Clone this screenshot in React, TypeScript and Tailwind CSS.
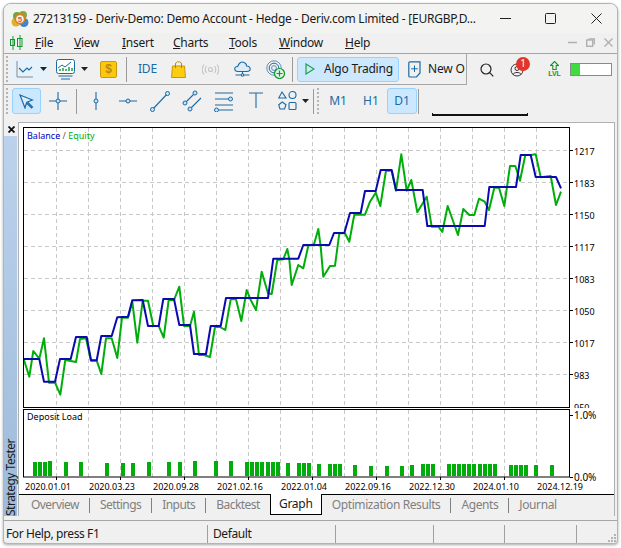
import React from "react";

const sans = "font-['Noto_Sans',sans-serif]";
const blue = "#1a6aa6";

const balance =
  "24,359 39.3,359 44,381.7 55,381.7 60,359 70.7,359 76,337 86.7,337 91,360.3 96.7,360.3 101.3,336 111.7,336 117.3,317.3 128,316.7 132.3,300.3 142.7,300 148,326 158.7,326 163.3,299 174,299 179.3,325 190,325 194,354 206,354 210.7,326 220.7,326 226,298 268,298 273.3,258.7 298.3,258.7 303.3,245 329.3,245 334,233 344.3,233 350,213 360.7,213 365,191 375.7,191 380.7,170 391.7,170 396,190 422.7,190 427.3,226 484.7,226 489.3,187 516,187 520.7,155 530.7,155 535.7,177 556,177 561,188.3";
const equity =
  "24,360 29.3,376.7 33.3,351 39.3,358.7 44,338.3 49,382.7 55,382.7 60.3,394.7 65.3,360 76,362 80,339 86,338.3 91,360.7 96.7,360.7 101.3,374 106,338.3 111.7,338.3 117.3,358 122,317.7 128,317.7 132.3,301.7 137.3,342.7 142.7,300.7 148,300.7 153.3,326 158.7,326 163.7,337.7 168.7,300 174,300 179.3,286.7 184,326 190,326 194,311.7 199,355 204,355 210,357 215,327 220,327 225.3,330 230.7,299.3 236,299.3 241.3,321 246.7,290 250.7,300 256,310 261.7,271.7 268,293.3 271.7,294 277.3,260 283.3,259.3 287.3,249 289.3,259.3 291.7,285 298.3,265 303.3,268.3 308.3,245.7 314,244.3 318.3,229 320.7,246.7 323.3,276.7 330,266 335,265.7 339.3,233.3 345,233.3 349.3,241.7 354.3,214.7 365,214.7 370,201.7 375.7,192.7 380.3,206 386,170.7 391.7,170.7 396,190.7 401.3,154.3 406.7,190.7 411.3,180 417.3,212.3 426.7,196.7 431.7,226.7 438.3,226.7 442.3,232 447.7,206 458,235 463.3,209 469.3,215 474.3,215 479,198.7 484.7,201.7 489,210 494.3,187.7 499,187.7 504.3,206 510,166 515.3,166 520,180.7 525.3,155 530.7,155 535.7,154.3 540.7,177.3 550.7,176 556,205 561,191.7";

const gridX = Array.from({ length: 16 }, (_, i) => 56.5 + 32 * i);
const gridY = [150.5, 182.5, 214.5, 246.5, 278.5, 310.5, 342.5, 374.5];
const yLabels = ["1217", "1183", "1150", "1117", "1083", "1050", "1017", "983", "950"];
const dates = ["2020.01.01", "2020.03.23", "2020.09.28", "2021.02.16", "2022.01.04", "2022.09.16", "2022.12.30", "2024.01.10", "2024.12.19"];

// x, top
const bars: [number, number][] = [
  [33, 462], [38, 462], [43, 462], [48, 461], [64, 462], [79, 462], [105, 463], [121, 463], [131, 463], [147, 462],
  [167, 462], [178, 462], [193, 461], [214, 461], [229, 461], [245, 462], [250, 462], [255, 462], [260, 462], [266, 462],
  [271, 462], [276, 462], [286, 463], [297, 463], [302, 463], [307, 463], [317, 464], [328, 464], [333, 464], [338, 464],
  [353, 465], [369, 466], [385, 466], [400, 466], [410, 465], [421, 464], [426, 464], [431, 464], [447, 464], [452, 464],
  [457, 464], [462, 464], [467, 464], [472, 464], [478, 464], [483, 464], [488, 464], [493, 464], [509, 465], [514, 465],
  [519, 465], [524, 465], [534, 465], [550, 465],
];

function Grip({ className }: { className?: string }) {
  return (
    <svg width="3" height="26" className={`shrink-0 ${className ?? ""}`}>
      {[1, 5, 9, 13, 17, 21, 25].map((y) => (
        <rect key={y} x="0" y={y - 1} width="2" height="2" fill="#b4b4b4" />
      ))}
    </svg>
  );
}

function Caret({ className }: { className?: string }) {
  return (
    <svg width="7" height="4" className={`shrink-0 ${className ?? ""}`}>
      <path d="M0 0H7L3.5 4Z" fill="#222" />
    </svg>
  );
}

function Sep({ className }: { className?: string }) {
  return <div className={`h-[25px] w-px shrink-0 bg-[#9a9a9a] ${className ?? ""}`} />;
}

function Logo() {
  return (
    <svg width="18" height="18" viewBox="0 0 18 18" className="shrink-0">
      <circle cx="5" cy="12" r="4.5" fill="#e3b02a" />
      <circle cx="13" cy="12.5" r="4.5" fill="#3f86c8" />
      <circle cx="6" cy="6" r="4" fill="#6fa83a" />
      <circle cx="12" cy="5" r="4" fill="#8aa63d" />
      <circle cx="9" cy="9" r="4.6" fill="#f4f4f4" stroke="#e07a1f" strokeWidth="1.6" />
      <text x="9" y="12" textAnchor="middle" fontSize="8" fontWeight="700" fill="#d9661a" fontFamily="Liberation Sans">5</text>
    </svg>
  );
}

function Candles() {
  return (
    <svg width="13" height="16" viewBox="0 0 13 16" stroke="#0c9a2c" fill="none" className="shrink-0">
      <path d="M3 1V15M10 0V15" />
      <rect x="0.5" y="4.5" width="4" height="6" />
      <rect x="7.5" y="3.5" width="4.5" height="8" />
    </svg>
  );
}

function Point({ cx, cy }: { cx: number; cy: number }) {
  return <circle cx={cx} cy={cy} r="2" fill="#cfe3f3" stroke={blue} strokeWidth="1" />;
}

function DrawIcon({ children }: { children: React.ReactNode }) {
  return (
    <svg width="20" height="22" viewBox="0 0 20 22" fill="none" stroke={blue} strokeWidth="1.1" className="shrink-0">
      {children}
    </svg>
  );
}

function Tab({ label, last, tight }: { label: string; last?: boolean; tight?: boolean }) {
  return (
    <div className="flex h-[20px] shrink-0 items-center">
      <span className={`px-[10px] text-[12px] text-[#808080] ${tight ? "tracking-[-0.55px]" : "tracking-[-0.4px]"}`}>{label}</span>
      {!last && <div className="h-[15px] w-px bg-[#808080]" />}
    </div>
  );
}

export default function App() {
  return (
    <div className={`h-[548px] w-[621px] overflow-hidden bg-white pb-[4px] pl-[3px] pr-[3px] pt-[3px] ${sans}`}>
      <div className="flex h-full flex-col overflow-hidden rounded-t-[8px] rounded-b-[4px] border border-[#b4b4b4] bg-[#f0f0f0] text-[#1a1a1a] shadow-[0_1px_3px_rgba(0,0,0,0.35)]">
        {/* Title bar */}
        <div className="flex h-[29px] shrink-0 items-center bg-[#f3f3f1] pl-[7px]">
          <Logo />
          <span className="ml-[4px] w-[444px] shrink-0 whitespace-nowrap text-[12px] tracking-[-0.24px]">
            27213159 - Deriv-Demo: Demo Account - Hedge - Deriv.com Limited - [EURGBP,D...
          </span>
          <svg width="11" height="11" className="ml-[23px]" stroke="#222" fill="none">
            <path d="M0 5.5H11" />
          </svg>
          <svg width="11" height="11" className="ml-[34px]" stroke="#222" fill="none">
            <rect x="0.5" y="0.5" width="10" height="10" rx="1" />
          </svg>
          <svg width="11" height="11" className="ml-[35px]" stroke="#222" fill="none">
            <path d="M0.5 0.5L10.5 10.5M10.5 0.5L0.5 10.5" />
          </svg>
        </div>

        {/* Menu */}
        <div className="flex h-[21px] shrink-0 items-center border-b border-[#a6a6a6] pl-[6px] text-[12px] tracking-[-0.25px]">
          <Candles />
          <div className="ml-[12px] w-[39px]"><span className="underline">F</span>ile</div>
          <div className="w-[48px]"><span className="underline">V</span>iew</div>
          <div className="w-[51px]"><span className="underline">I</span>nsert</div>
          <div className="w-[56px]"><span className="underline">C</span>harts</div>
          <div className="w-[50px]"><span className="underline">T</span>ools</div>
          <div className="w-[66px]"><span className="underline">W</span>indow</div>
          <div><span className="underline">H</span>elp</div>
          <div className="ml-auto mr-[4px] flex items-center gap-[9px] pb-[2px]" >
            <svg width="9" height="9" stroke="#b0b0b0" fill="none"><path d="M0 4.5H9" strokeWidth="1.4" /></svg>
            <svg width="9" height="9" stroke="#b0b0b0" fill="none" strokeWidth="1.4"><rect x="0.7" y="2" width="6" height="6.3" /><path d="M2.5 1H8.3V6.5" /></svg>
            <svg width="9" height="9" stroke="#b0b0b0" fill="none" strokeWidth="1.4"><path d="M0.5 0.5L8.5 8.5M8.5 0.5L0.5 8.5" /></svg>
          </div>
        </div>

        {/* Toolbar 1 */}
        <div className="flex h-[31px] shrink-0 items-center">
          <div className="flex h-full w-[463px] shrink-0 items-center overflow-hidden border-b border-r border-[#a6a6a6]">
            <Grip className="ml-[2px]" />
            <div className="ml-[3px] flex h-[25px] w-[38px] shrink-0 items-center rounded-[3px] bg-[#e5f1fb] pl-[4px]">
              <svg width="18" height="18" viewBox="0 0 18 18" fill="none" className="shrink-0">
                <path d="M1 1V17H17" stroke="#8a8a8a" />
                <path d="M3 8L7 12L11 8L13 10L16 7" stroke={blue} strokeWidth="1.1" />
              </svg>
              <Caret className="ml-[6px]" />
            </div>
            <svg width="19" height="21" viewBox="0 0 19 21" fill="none" className="ml-[6px] shrink-0">
              <rect x="0.5" y="0.5" width="18" height="14" rx="2" stroke={blue} fill="#fff" />
              <path d="M2 9L6 6L9 8L15 3" stroke={blue} />
              <path d="M4 12V10M7 12V9M10 12V10M13 12V8M16 12V9" stroke="#0c9a2c" strokeWidth="1.4" />
              <path d="M2.5 17H16.5M5 20H14" stroke={blue} strokeWidth="1.2" />
            </svg>
            <Caret className="ml-[6px]" />
            <div className="ml-[12px] flex h-[17px] w-[17px] shrink-0 items-center justify-center rounded-[2px] border border-[#c79a12] bg-[#fbc80e] font-['Liberation_Sans',sans-serif] text-[12px] font-bold text-[#b98a10]">$</div>
            <Sep className="ml-[9px]" />
            <span className="ml-[11px] w-[17px] shrink-0 whitespace-nowrap text-[12px] tracking-[-0.2px] text-[#1a6aa6]">IDE</span>
            <svg width="15" height="17" viewBox="0 0 15 17" fill="none" className="ml-[16px] shrink-0">
              <path d="M1.5 5H13.5L14.5 16.5H0.5Z" fill="#fccd0e" stroke="#c7951a" />
              <path d="M4.5 7V3C4.5 0 10.5 0 10.5 3V7" stroke="#b5851a" />
            </svg>
            <svg width="17" height="11" viewBox="0 0 17 11" fill="none" stroke="#c4c4c4" strokeWidth="1.1" className="ml-[16px] shrink-0">
              <circle cx="8.5" cy="5.5" r="2" />
              <path d="M4.5 2C3 4 3 7 4.5 9M12.5 2C14 4 14 7 12.5 9M2 0.5C-0.2 3.5 -0.2 7.5 2 10.5M15 0.5C17.2 3.5 17.2 7.5 15 10.5" />
            </svg>
            <svg width="17" height="16" viewBox="0 0 17 16" fill="none" stroke={blue} strokeWidth="1.1" className="ml-[15px] shrink-0">
              <path d="M4 10.5C1.5 10.5 0.5 9 0.8 7.5C1 6 2.5 5.3 3.7 5.5C4.3 2.5 7 0.5 9.5 1.2C11.5 1.8 12.5 3.3 12.6 5C14.8 5 16.3 6.5 16.2 8.2C16 9.7 15 10.5 13 10.5Z" fill="#dcecf8" />
              <path d="M8.5 10.5V13.5M1.5 14H15.5" />
              <circle cx="8.5" cy="14" r="1.2" fill="#fff" />
            </svg>
            <svg width="19" height="19" viewBox="0 0 19 19" fill="none" className="ml-[15px] shrink-0">
              <circle cx="8" cy="8" r="7.2" stroke="#5b8fb8" />
              <circle cx="8" cy="8" r="4.8" stroke={blue} />
              <circle cx="8" cy="8" r="2.4" stroke="#5b8fb8" />
              <circle cx="13.5" cy="13.5" r="5" fill="#dff5e3" stroke="#0c9a2c" strokeWidth="1.2" />
              <path d="M13.5 10.5V16.5M10.5 13.5H16.5" stroke="#0c9a2c" strokeWidth="1.2" />
            </svg>
            <Sep className="ml-[7px]" />
            <div className="ml-[4px] flex h-[25px] w-[102px] shrink-0 items-center rounded-[3px] border border-[#99d1ff] bg-[#cce8ff] pl-[7px] text-[12px] tracking-[-0.2px]">
              <svg width="10" height="12" viewBox="0 0 10 12" fill="none" className="shrink-0"><path d="M1 1L9 6L1 11Z" stroke="#1aa344" strokeWidth="1.2" /></svg>
              <span className="ml-[9px] whitespace-nowrap">Algo Trading</span>
            </div>
            <svg width="13" height="17" viewBox="0 0 13 17" fill="none" stroke={blue} className="ml-[9px] shrink-0">
              <path d="M2 0.8H12V12L8.5 16H2C1 16 0.8 15.5 0.8 15V2C0.8 1.2 1 0.8 2 0.8Z" strokeWidth="1.2" />
              <path d="M6.5 4.5V11M3.2 7.8H9.8" />
            </svg>
            <span className="ml-[7px] whitespace-nowrap text-[12px] tracking-[-0.2px]">New O</span>
          </div>
          <svg width="14" height="14" viewBox="0 0 14 14" fill="none" stroke="#222" strokeWidth="1.2" className="ml-[13px] shrink-0">
            <circle cx="6" cy="6" r="5" />
            <path d="M9.7 9.7L13.3 13.3" />
          </svg>
          <div className="relative ml-[16px] h-[14px] w-[14px] shrink-0">
            <svg width="14" height="14" viewBox="0 0 14 14" fill="none" stroke="#333">
              <circle cx="7" cy="7" r="6" />
              <circle cx="7" cy="5.5" r="2" />
              <path d="M3 11.5C4 8.8 10 8.8 11 11.5" />
            </svg>
            <div className="absolute -top-[6px] left-[6px] flex h-[14px] w-[14px] items-center justify-center rounded-full bg-[#e2352a] text-[10px] text-white">1</div>
          </div>
          <div className="ml-[24px] flex w-[13px] shrink-0 flex-col items-center">
            <svg width="9" height="9" viewBox="0 0 9 9" fill="none" stroke="#0c9a2c" strokeWidth="1.1">
              <path d="M4.5 0.5L8.5 4.5H6.2V8.5H2.8V4.5H0.5Z" />
            </svg>
            <span className="font-['Liberation_Sans',sans-serif] text-[7px] font-bold leading-[8px] text-[#0c9a2c]">LVL</span>
          </div>
          <div className="ml-[9px] h-[13px] w-[42px] shrink-0 border border-[#8a8a8a] bg-white">
            <div className="h-full w-[9px] bg-[#3fdc3f]" />
          </div>
        </div>

        {/* Toolbar 2 */}
        <div className="flex h-[32px] shrink-0 items-center">
          <Grip className="ml-[2px]" />
          <div className="ml-[3px] flex h-[26px] w-[29px] shrink-0 items-center justify-center rounded-[3px] border border-[#99d1ff] bg-[#cce8ff]">
            <svg width="15" height="15" viewBox="0 0 15 15" fill="#dcecf8" stroke={blue} strokeWidth="1.2">
              <path d="M1 1L13.5 6L8.5 8L13.5 13L12.5 14L7.5 9L6 14Z" />
            </svg>
          </div>
          <div className="ml-[7px] shrink-0">
            <DrawIcon>
              <path d="M1 11H19M10 2V20" />
              <Point cx={10} cy={11} />
            </DrawIcon>
          </div>
          <Sep className="ml-[8px]" />
          <div className="ml-[9px] flex shrink-0 items-center gap-[12px]">
            <DrawIcon>
              <path d="M10 2V20" />
              <Point cx={10} cy={11} />
            </DrawIcon>
            <DrawIcon>
              <path d="M1 11H19" />
              <Point cx={10} cy={11} />
            </DrawIcon>
            <DrawIcon>
              <path d="M2 20L18 3" />
              <Point cx={2.5} cy={19.5} />
              <Point cx={17.5} cy={3.5} />
            </DrawIcon>
            <DrawIcon>
              <path d="M2 14L14 2M7 20L19 8" />
              <Point cx={3} cy={13} />
              <Point cx={13} cy={3} />
              <Point cx={8} cy={19} />
            </DrawIcon>
            <DrawIcon>
              <path d="M1 3H19M1 9H15M1 15H19M5 20H19" />
              <Point cx={16.5} cy={9} />
              <Point cx={2.5} cy={20} />
            </DrawIcon>
            <DrawIcon>
              <path d="M3 3H17M10 3V18" />
            </DrawIcon>
            <DrawIcon>
              <path d="M4 2L8 8H0.7Z" />
              <circle cx="14.5" cy="5" r="3.5" />
              <path d="M4.3 12L8 14.7L6.5 19H2L0.7 14.7Z" />
              <rect x="11" y="12.5" width="7" height="7" rx="1" />
            </DrawIcon>
          </div>
          <Caret className="ml-[4px]" />
          <Sep className="ml-[4px]" />
          <Grip className="ml-[3px]" />
          <span className="ml-[8px] w-[20px] shrink-0 text-center text-[12px] text-[#1a6aa6]">M1</span>
          <span className="ml-[13px] w-[20px] shrink-0 text-center text-[12px] text-[#1a6aa6]">H1</span>
          <div className="ml-[6px] flex h-[26px] w-[30px] shrink-0 items-center justify-center rounded-[3px] border border-[#99d1ff] bg-[#cce8ff] text-[12px] text-[#1a6aa6]">D1</div>
          <Sep className="ml-[1px]" />
          <div className="mb-px ml-[13px] h-[3px] w-[96px] shrink-0 self-end border-b-2 border-x border-[#111]" />
        </div>

        {/* Body */}
        <div className="mt-[5px] flex min-h-0 flex-1">
          <div className="flex w-[14px] shrink-0 flex-col">
            <div className="flex h-[14px] shrink-0 items-center justify-center">
              <svg width="7" height="7" stroke="#111" strokeWidth="1.8"><path d="M0.5 0.5L6.5 6.5M6.5 0.5L0.5 6.5" /></svg>
            </div>
            <div className="flex h-[380px] w-[13px] items-start justify-center bg-gradient-to-b from-[#bcd2ec] to-[#9dbbda]">
              <span className="mt-auto rotate-180 whitespace-nowrap text-[12px] leading-[13px] tracking-[-0.5px] [writing-mode:vertical-rl]">Strategy Tester</span>
            </div>
          </div>

          <div className="flex h-[394px] w-[597px] shrink-0 flex-col border-l border-r border-t border-[#b0b0b0] bg-white">
            <div className="box-content flex h-[282px] shrink-0 pl-[4px] pt-[3px]">
              <div className="relative h-[282px] w-[550px] shrink-0">
                <svg width="550" height="282" viewBox="23 126 550 282" className="block">
                  {gridX.map((x) => (
                    <path key={x} d={`M${x} 128V407`} stroke="#c8c8c8" strokeDasharray="4 3" />
                  ))}
                  {gridY.map((y) => (
                    <path key={y} d={`M24 ${y}H569`} stroke="#c8c8c8" strokeDasharray="4 3" />
                  ))}
                  <polyline points={equity} fill="none" stroke="#00ad0a" strokeWidth="2" strokeLinejoin="round" />
                  <polyline points={balance} fill="none" stroke="#0a0ab0" strokeWidth="2" strokeLinejoin="round" />
                  <rect x="23.5" y="127.5" width="546" height="280" fill="none" stroke="#000" />
                  {gridY.map((y) => (
                    <path key={y} d={`M570 ${y}H573`} stroke="#000" />
                  ))}
                </svg>
                <div className="absolute left-[4px] top-[4px] whitespace-nowrap text-[9px] leading-[12px]">
                  <span className="text-[#0000c0]">Balance</span>
                  <span className="text-[#805050]"> / </span>
                  <span className="text-[#00ad0a]">Equity</span>
                </div>
              </div>
              <div className="ml-[1px] flex h-[282px] w-[40px] flex-col overflow-hidden pt-[9px]">
                {yLabels.map((label) => (
                  <div key={label} className="flex h-[32px] shrink-0 items-center text-[9px] leading-none text-black">{label}</div>
                ))}
              </div>
            </div>
            <div className="flex h-[71px] shrink-0 pl-[4px]">
              <div className="relative h-[72px] w-[550px] shrink-0">
                <svg width="550" height="72" viewBox="23 408 550 72" className="block">
                  {gridX.map((x) => (
                    <path key={x} d={`M${x} 410V477`} stroke="#c8c8c8" strokeDasharray="4 3" />
                  ))}
                  {bars.map(([x, top]) => (
                    <rect key={x} x={x} y={top} width="4" height={476 - top} fill="#00ad0a" />
                  ))}
                  <rect x="23.5" y="409.5" width="546" height="67.5" fill="none" stroke="#000" />
                  {gridX.map((x, i) => i % 2 === 0 && <path key={x} d={`M${x} 477V480`} stroke="#000" />)}
                  <path d="M570 415.5H573M570 477.5H573" stroke="#000" />
                </svg>
                <div className="absolute left-[4px] top-[3px] whitespace-nowrap text-[9px] leading-[12px] text-black">Deposit Load</div>
              </div>
              <div className="ml-[1px] flex h-[75px] w-[40px] shrink-0 flex-col justify-between pt-px text-[10px] leading-[12px] text-black">
                <span>1.0%</span>
                <span>0.0%</span>
              </div>
            </div>
            <div className="flex h-[15px] shrink-0 items-center pl-[6px]">
              {dates.map((d) => (
                <span key={d} className="w-[64px] shrink-0 whitespace-nowrap text-[9px] leading-none text-black">{d}</span>
              ))}
            </div>
            <div className="flex h-[22px] shrink-0 items-start border-t border-black bg-[#f0f0f0] pl-[2px]">
              <Tab label="Overview" tight />
              <Tab label="Settings" tight />
              <Tab label="Inputs" tight />
              <Tab label="Backtest" last tight />
              <div className="-mt-px flex h-[21px] w-[52px] shrink-0 items-center justify-center border-x border-b border-black bg-white text-[12px] tracking-[-0.25px]">Graph</div>
              <Tab label="Optimization Results" />
              <Tab label="Agents" />
              <Tab label="Journal" last />
            </div>
          </div>
        </div>

        {/* Status bar */}
        <div className="flex h-[23px] shrink-0 items-end border-t border-[#a6a6a6] pl-[1px] text-[12px] tracking-[-0.4px]">
          <div className="flex h-[18px] w-[203px] shrink-0 items-center border-r border-[#a0a0a0] pl-[1px]">For Help, press F1</div>
          <div className="flex h-[18px] w-[128px] shrink-0 items-center border-r border-[#a0a0a0] pl-[5px]">Default</div>
          <div className="h-[18px] w-[98px] shrink-0 border-r border-[#a0a0a0]" />
          <div className="h-[18px] w-[71px] shrink-0 border-r border-[#a0a0a0]" />
          <div className="h-[18px] w-[72px] shrink-0 border-r border-[#a0a0a0]" />
          <svg width="9" height="9" className="ml-auto shrink-0" fill="#b4b4b4">
            <rect x="6" y="0" width="2" height="2" />
            <rect x="3" y="3" width="2" height="2" />
            <rect x="6" y="3" width="2" height="2" />
            <rect x="0" y="6" width="2" height="2" />
            <rect x="3" y="6" width="2" height="2" />
            <rect x="6" y="6" width="2" height="2" />
          </svg>
        </div>
      </div>
    </div>
  );
}
